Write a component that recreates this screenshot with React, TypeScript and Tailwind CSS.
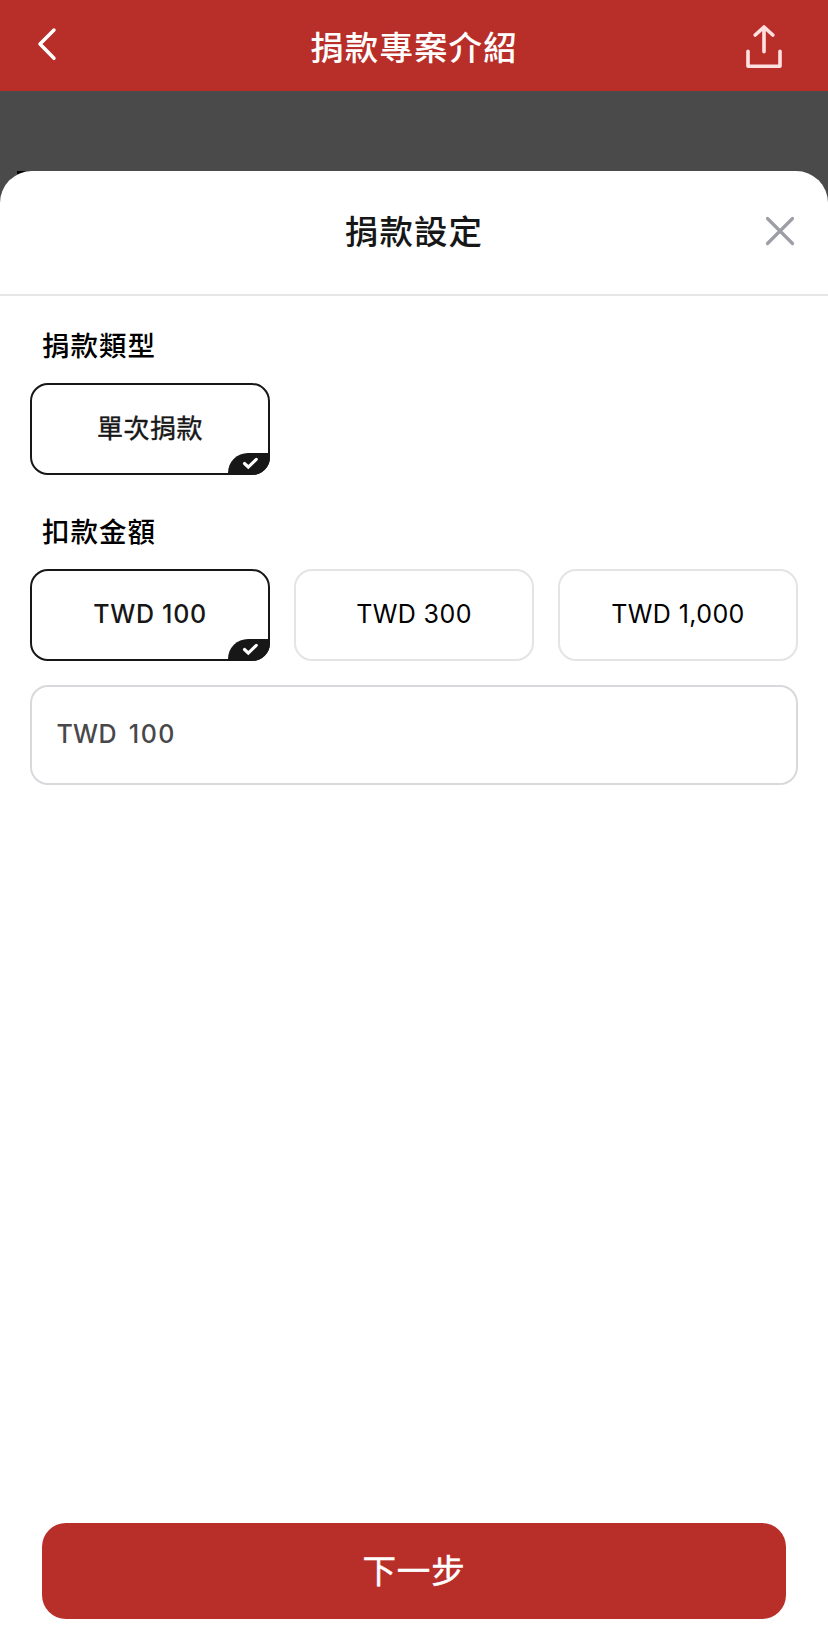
import type { ReactNode } from "react";

function SelectedMark() {
  return (
    <span className="absolute -right-[2px] -bottom-[2px] flex h-[22px] w-[42px] rounded-tl-[20px] rounded-br-[18px] bg-[#171718]">
      <svg width="42" height="22" viewBox="0 0 42 22" fill="none">
        <path d="M16.5 10.5L20.3 14L28.3 6.3" stroke="white" strokeWidth="3.1" strokeLinecap="round" strokeLinejoin="miter" />
      </svg>
    </span>
  );
}

function Option({ selected = false, className, children }: { selected?: boolean; className: string; children: ReactNode }) {
  return (
    <button
      type="button"
      className={`relative flex h-[92px] w-[240px] items-center justify-center whitespace-nowrap rounded-[18px] border-2 ${
        selected ? "border-[#171718] text-[#171718]" : "border-[#e4e4e5] text-black"
      } ${className}`}
    >
      {children}
      {selected && <SelectedMark />}
    </button>
  );
}

export default function App() {
  return (
    <div className="flex h-[1648px] w-[828px] flex-col overflow-hidden bg-[#4a4a4a] font-['Inter','Noto_Sans_CJK_TC',sans-serif]">
      <header className="flex h-[91px] shrink-0 items-center justify-between bg-[#b82e29] pr-[44px] pl-[36px] text-white">
        <svg width="42" height="40" viewBox="0 0 42 40" fill="none" className="-mt-[3px]">
          <path d="M18 6L4 20L18 34.3" stroke="white" strokeWidth="3.5" strokeLinecap="round" strokeLinejoin="round" />
        </svg>
        <h1 className="pt-[4px] pl-[6px] text-[33.5px] leading-[48px] font-medium tracking-[1.1px]">捐款專案介紹</h1>
        <svg width="40" height="46" viewBox="0 0 40 46" fill="none" className="mt-[1px]" stroke="#ffe0e1" strokeWidth="3.6" strokeLinecap="round" strokeLinejoin="round">
          <path d="M20 28.8V4.5M11.2 12L20 4L28.8 12" />
          <path d="M4 28.3V43.2H36V28.3" />
        </svg>
      </header>
      <div className="relative mt-[80px] flex grow flex-col">
        <span className="absolute top-0 left-[17px] h-[3px] w-[12px] bg-black" />
        <main className="relative flex grow flex-col rounded-t-[32px] bg-white">
          <div className="flex h-[125px] shrink-0 items-center justify-between border-b-2 border-[#e6e6e7] px-[30px]">
            <span className="w-[36px]" />
            <h2 className="-mt-[2px] text-[33.5px] leading-[48px] font-medium tracking-[1.1px] text-[#171718]">捐款設定</h2>
            <svg width="36" height="36" viewBox="0 0 36 36" fill="none" className="-mt-[3px]">
              <path d="M5.5 5.5L30.5 30.5M30.5 5.5L5.5 30.5" stroke="#9d9da6" strokeWidth="3.2" strokeLinecap="round" />
            </svg>
          </div>
          <section className="px-[30px] pt-[30px]">
            <h3 className="ml-[12px] h-[57px] text-[27.5px] leading-[40px] font-medium tracking-[1px] text-black">捐款類型</h3>
            <Option selected className="pb-[2px] text-[26px] tracking-[0.5px] [-webkit-text-stroke:0.4px_#171718]">單次捐款</Option>
          </section>
          <section className="px-[30px] pt-[37px]">
            <h3 className="ml-[12px] h-[57px] text-[27.5px] leading-[40px] font-medium tracking-[1px] text-black">扣款金額</h3>
            <div className="flex gap-6">
              <Option selected className="text-[25px] font-medium tracking-[0.7px]">TWD 100</Option>
              <Option className="text-[25px] tracking-[0.4px]">TWD 300</Option>
              <Option className="text-[25px] tracking-[0.4px]">TWD 1,000</Option>
            </div>
            <div className="mt-6 flex h-[100px] items-center gap-3 rounded-[18px] border-2 border-[#d9d9dd] pl-[24.5px] text-[25px] font-medium text-[#48484b]">
              <span className="tracking-[0.3px]">TWD</span>
              <span className="tracking-[1.5px]">100</span>
            </div>
          </section>
          <button type="button" className="mx-[42px] mt-auto mb-[29px] flex h-[96px] shrink-0 items-center justify-center rounded-[24px] bg-[#b82e29] pt-[1px] text-[33.5px] tracking-[0.8px] text-white [-webkit-text-stroke:0.5px_white]">
            下一步
          </button>
        </main>
      </div>
    </div>
  );
}
